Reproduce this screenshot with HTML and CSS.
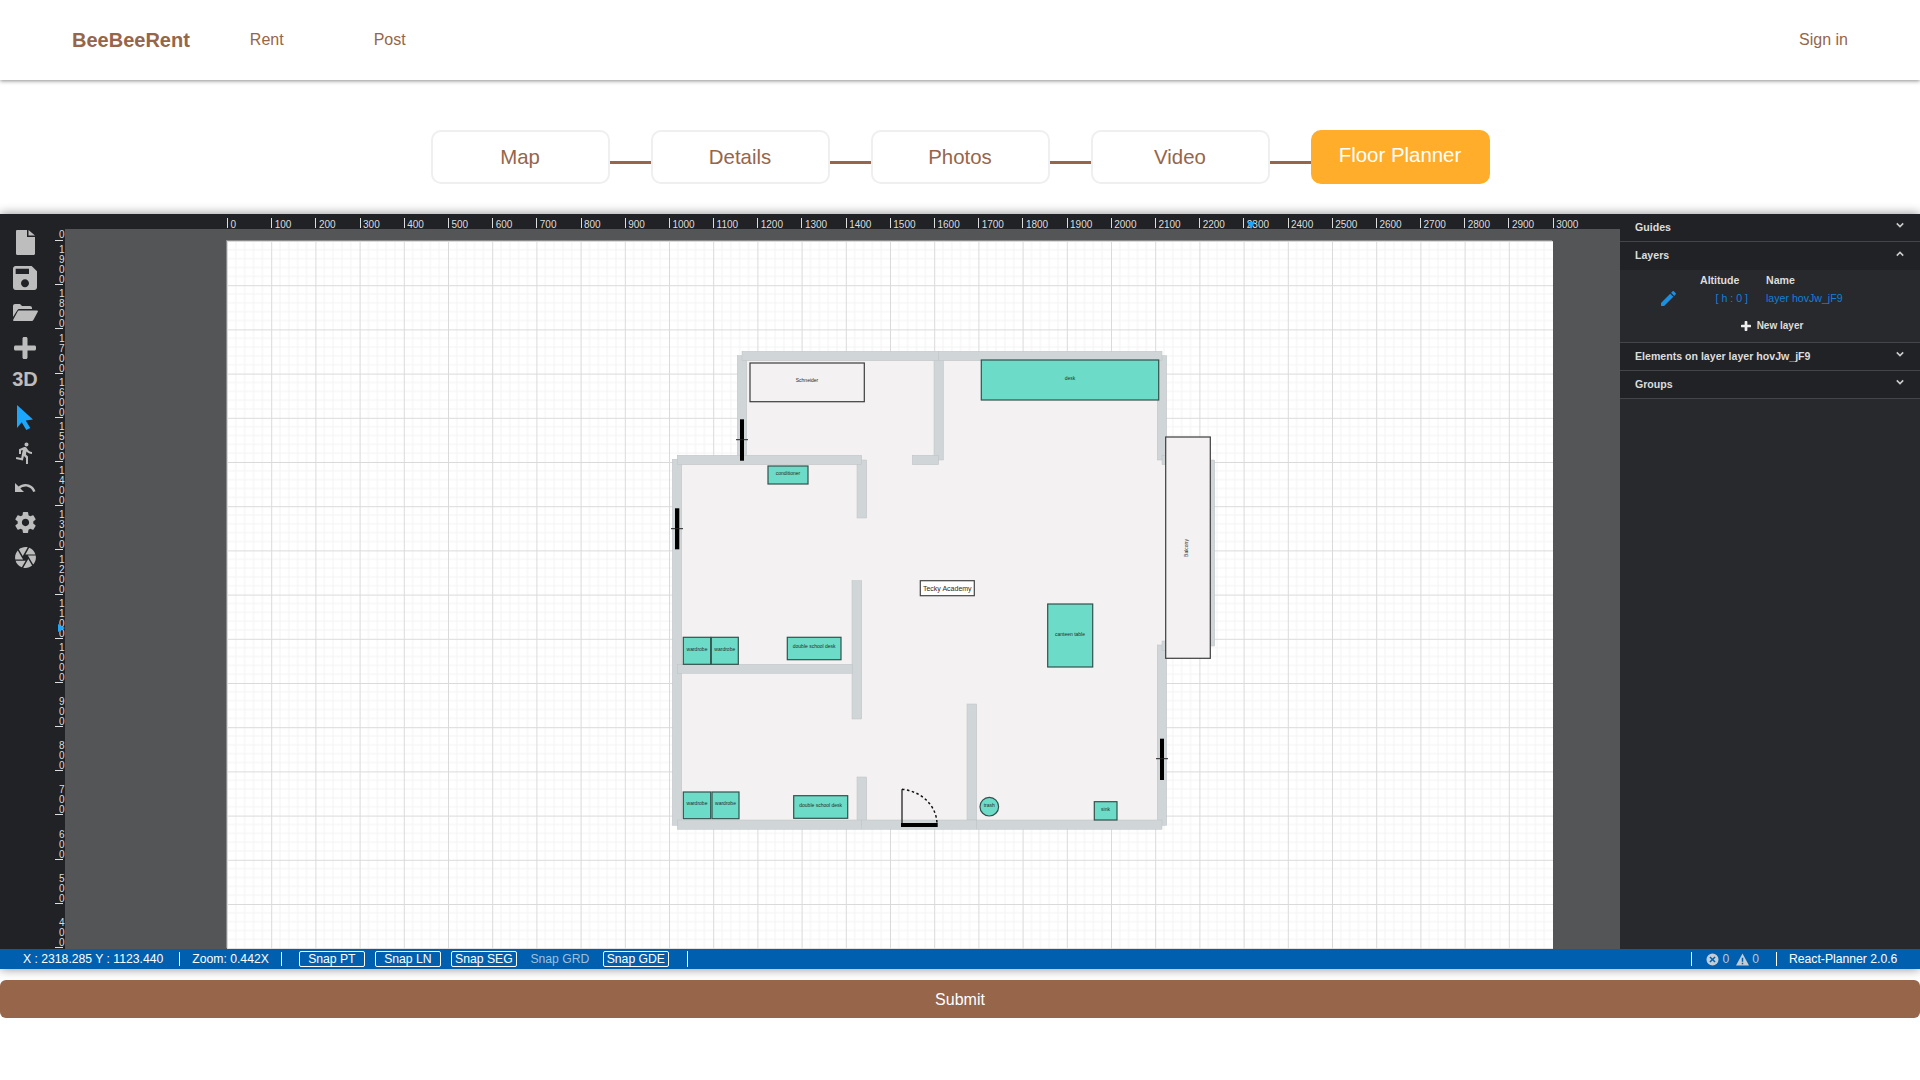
FILE: index.html
```html
<!DOCTYPE html>
<html>

<head>
	<meta charset="utf-8">
	<title>BeeBeeRent</title>
	<link rel="stylesheet" href="styles.css">
</head>

<body>
	<header class="topbar">
		<a class="logo">BeeBeeRent</a>
		<nav class="nav">
			<a>Rent</a>
			<a>Post</a>
		</nav>
		<a class="sign-in">Sign in</a>
	</header>

	<div class="stepper">
		<div class="step">Map</div>
		<span class="link"></span>
		<div class="step">Details</div>
		<span class="link"></span>
		<div class="step">Photos</div>
		<span class="link"></span>
		<div class="step">Video</div>
		<span class="link"></span>
		<div class="step active">Floor Planner</div>
	</div>

	<section class="editor">
		<div class="editor-main">
			<aside class="toolbar">
				<div class="tool"><svg class="i-file" viewBox="0 0 19 25"><path d="M0 1.2C0 .5.5 0 1.2 0H11v7h8v16.8c0 .7-.5 1.2-1.200 1.200H1.200C.5 25 0 24.500 0 23.800zM12.500 0L19 5.500h-6.500z"/></svg></div>
				<div class="tool"><svg class="i-24" viewBox="3 3 18 18"><path d="M17 3H5c-1.110 0-2 .9-2 2v14c0 1.100.89 2 2 2h14c1.100 0 2-.9 2-2V7l-4-4zm-5 16c-1.660 0-3-1.340-3-3s1.340-3 3-3 3 1.340 3 3-1.340 3-3 3zm3-10H5V5h10v4z"/></svg></div>
				<div class="tool"><svg class="i-folder" viewBox="0 0 25 17"><path d="M0 13V2C0 .9.9 0 2 0h5l2 2h8c1.100 0 2 .9 2 2v1H6.500c-1 0-1.700.5-2.200 1.300z"/><path d="M6 6.500h18c.8 0 1.200.6.8 1.300l-4.300 8c-.4.8-1.200 1.200-2 1.200H1c-.8 0-1.200-.6-.8-1.300l4.300-8c.3-.7.800-1.200 1.500-1.200z"/></svg></div>
				<div class="tool"><svg class="i-plus" viewBox="0 0 22 22"><path d="M8.500 1.500C8.500.7 9.200 0 10 0h2c.8 0 1.500.7 1.500 1.500v7h7c.8 0 1.500.7 1.500 1.500v2c0 .8-.7 1.500-1.500 1.500h-7v7c0 .8-.7 1.500-1.500 1.500h-2c-.8 0-1.500-.7-1.500-1.500v-7h-7C.7 13.500 0 12.800 0 12v-2c0-.8.7-1.500 1.500-1.500h7z"/></svg></div>
				<div class="tool tool-3d">3D</div>
				<div class="tool selected"><svg class="i-pointer" viewBox="0 0 16 25"><path d="M0 0l16 14.500-7.300.9 4.600 7.700-4 1.900-4.600-7.800L0 23z"/></svg></div>
				<div class="tool"><svg class="i-24" viewBox="0 0 24 24"><path d="M13.490 5.480c1.100 0 2-.9 2-2s-.9-2-2-2-2 .9-2 2 .9 2 2 2zm-3.600 13.900l1-4.400 2.100 2v6h2v-7.500l-2.100-2 .6-3c1.300 1.500 3.300 2.500 5.500 2.500v-2c-1.900 0-3.500-1-4.300-2.400l-1-1.600c-.4-.6-1-1-1.700-1-.3 0-.5.1-.8.1l-5.200 2.200v4.700h2v-3.400l1.800-.7-1.600 8.100-4.900-1-.4 2 7 1.400z"/></svg></div>
				<div class="tool"><svg class="i-24" viewBox="0 0 24 24"><path d="M12.500 8c-2.650 0-5.050.99-6.900 2.600L2 7v9h9l-3.620-3.620c1.390-1.160 3.160-1.880 5.120-1.880 3.540 0 6.550 2.310 7.600 5.500l2.370-.78C21.080 11.030 17.150 8 12.500 8z"/></svg></div>
				<div class="tool"><svg class="i-25" viewBox="0 0 24 24"><path d="M19.430 12.980c.04-.32.07-.64.07-.98s-.03-.66-.07-.98l2.110-1.650c.19-.15.24-.42.12-.64l-2-3.460c-.12-.22-.39-.3-.61-.22l-2.490 1c-.52-.4-1.080-.73-1.690-.98l-.38-2.650C14.460 2.180 14.250 2 14 2h-4c-.25 0-.46.18-.49.42l-.38 2.650c-.61.25-1.170.59-1.690.98l-2.490-1c-.23-.09-.49 0-.61.22l-2 3.460c-.13.22-.07.49.12.64l2.110 1.650c-.04.32-.07.65-.07.98s.03.66.07.98l-2.110 1.650c-.19.15-.24.42-.12.64l2 3.460c.12.22.39.3.61.22l2.490-1c.52.4 1.080.73 1.690.98l.38 2.650c.03.24.24.42.49.42h4c.25 0 .46-.18.49-.42l.38-2.650c.61-.25 1.170-.59 1.690-.98l2.490 1c.23.09.49 0 .61-.22l2-3.460c.12-.22.07-.49-.12-.64l-2.110-1.650zM12 15.500c-1.930 0-3.500-1.570-3.500-3.500s1.570-3.500 3.500-3.500 3.500 1.570 3.500 3.500-1.570 3.500-3.500 3.500z"/></svg></div>
				<div class="tool"><svg class="i-25" viewBox="0 0 24 24"><path d="M9.400 10.500l4.770-8.260C13.470 2.090 12.750 2 12 2c-2.400 0-4.600.85-6.320 2.250l3.660 6.350.06-.1zM21.540 9c-.92-2.920-3.150-5.260-6-6.340L11.880 9h9.660zm.26 1h-7.490l.29.5 4.760 8.250C21 16.970 22 14.610 22 12c0-.69-.07-1.350-.2-2zM8.540 12l-3.900-6.750C3.010 7.030 2 9.390 2 12c0 .69.07 1.350.2 2h7.490l-1.150-2zm-6.080 3c.92 2.920 3.150 5.260 6 6.340L12.120 15H2.460zm11.270 0l-3.900 6.760c.7.15 1.420.24 2.170.24 2.400 0 4.600-.85 6.320-2.250l-3.660-6.350-.93 1.600z"/></svg></div>
			</aside>

			<div class="workspace">
				<div class="ruler-corner"></div>
				<div class="ruler-x">
					<span>0</span><span>100</span><span>200</span><span>300</span><span>400</span><span>500</span><span>600</span><span>700</span><span>800</span><span>900</span>
					<span>1000</span><span>1100</span><span>1200</span><span>1300</span><span>1400</span><span>1500</span><span>1600</span><span>1700</span><span>1800</span><span>1900</span>
					<span>2000</span><span>2100</span><span>2200</span><span>2300</span><span>2400</span><span>2500</span><span>2600</span><span>2700</span><span>2800</span><span>2900</span>
					<span>3000</span>
					<i class="marker-x"></i>
				</div>
				<div class="ruler-y">
					<span class="first">0</span><span>1900</span><span>1800</span><span>1700</span><span>1600</span><span>1500</span><span>1400</span><span>1300</span>
					<span>1200</span><span>1100</span><span>1000</span><span>900</span><span>800</span><span>700</span><span>600</span><span>500</span><span>400</span>
					<i class="marker-y"></i>
				</div>
				<div class="canvas">
					<div class="sheet">
						<svg class="plan" width="1326" height="708" viewBox="227 241 1326 708">
							<defs>
								<pattern id="grid" x="227" y="241" width="44.2" height="44.2" patternUnits="userSpaceOnUse">
									<path class="grid-minor" d="M8.840 0V44.200M17.680 0V44.200M26.520 0V44.200M35.360 0V44.200M0 8.840H44.200M0 17.680H44.200M0 26.520H44.200M0 35.360H44.200"/>
									<path class="grid-major" d="M.5 0V44.200M0 .5H44.200"/>
								</pattern>
							</defs>
							<rect x="227" y="241" width="1326" height="708" fill="url(#grid)"/>

							<polygon class="floor" points="742,356 1162,356 1162,460 1210,460 1210,645 1162,645 1162,825 677,825 677,460 742,460"/>

							<!-- walls -->
							<rect class="wall" x="1205" y="460" width="9.700" height="186"/>
							<rect class="wall" x="737.300" y="355.700" width="9.400" height="104.300"/>
							<rect class="wall" x="934" y="355.700" width="9.400" height="104.300"/>
							<rect class="wall" x="1157.300" y="355.700" width="9.400" height="104.300"/>
							<rect class="wall" x="1157.300" y="645" width="9.400" height="180.300"/>
							<rect class="wall" x="672.300" y="459.300" width="9.400" height="366"/>
							<rect class="wall" x="857" y="460" width="9.700" height="58"/>
							<rect class="wall" x="852" y="580.700" width="9.700" height="138.300"/>
							<rect class="wall" x="857" y="777" width="9.700" height="48.300"/>
							<rect class="wall" x="967" y="704" width="9.700" height="116"/>
							<rect class="wall" x="742" y="351.300" width="196.300" height="9.400"/>
							<rect class="wall" x="938.300" y="351.300" width="223.700" height="9.400"/>
							<rect class="wall" x="677.300" y="455.300" width="184.400" height="9.400"/>
							<rect class="wall" x="912.300" y="455.300" width="26.400" height="9.400"/>
							<rect class="wall" x="677.300" y="664.300" width="175.400" height="9"/>
							<rect class="wall" x="677.300" y="820" width="184" height="9.300"/>
							<rect class="wall" x="861.300" y="820" width="115.400" height="9.300"/>
							<rect class="wall" x="976.700" y="820" width="185.300" height="9.300"/>
							<rect class="wall" x="1162" y="455.300" width="5" height="9.400"/>
							<rect class="wall" x="1162" y="641" width="5" height="9.400"/>

							<!-- windows -->
							<rect class="opening" x="740" y="419.300" width="4" height="41.400"/>
							<path class="opening-line" d="M736 439.700H748"/>
							<rect class="opening" x="675" y="508.300" width="4.300" height="41"/>
							<path class="opening-line" d="M671 528.700H683"/>
							<rect class="opening" x="1160" y="738.700" width="4" height="41.300"/>
							<path class="opening-line" d="M1156 758.700H1168"/>

							<!-- door -->
							<rect class="opening" x="901" y="823" width="36.700" height="4"/>
							<path class="door-leaf" d="M902 823V789.300"/>
							<path class="door-arc" d="M902 789.300C920 791 936 804 937 823"/>

							<!-- items -->
							<rect class="item plain" x="750" y="363" width="114.300" height="38.700"/>
							<text class="label" x="807" y="380.500">Schneider</text>
							<rect class="item" x="981.300" y="360" width="177.400" height="40"/>
							<text class="label" x="1070" y="378.500">desk</text>
							<rect class="item" x="768" y="466" width="40" height="18"/>
							<text class="label" x="788" y="473.500">conditioner</text>
							<rect class="item note" x="920.300" y="580.700" width="54" height="15"/>
							<text class="label big" x="947.300" y="589">Tecky Academy</text>
							<rect class="item" x="1047.700" y="604" width="45" height="63"/>
							<text class="label" x="1070" y="634.500">canteen table</text>
							<rect class="item plain" x="1165.700" y="437" width="44.600" height="221.300"/>
							<text class="label" transform="translate(1187 548) rotate(-90)">Balcony</text>
							<rect class="item" x="683.300" y="637.300" width="27.400" height="27"/>
							<text class="label" x="697" y="649.800">wardrobe</text>
							<rect class="item" x="711.300" y="637.300" width="27" height="27"/>
							<text class="label" x="724.800" y="649.800">wardrobe</text>
							<rect class="item" x="787.300" y="637.300" width="53.700" height="22.400"/>
							<text class="label" x="814.200" y="646.800">double school desk</text>
							<rect class="item" x="683.300" y="792" width="27.400" height="26.700"/>
							<text class="label" x="697" y="803.800">wardrobe</text>
							<rect class="item" x="712" y="792" width="27" height="26.700"/>
							<text class="label" x="725.500" y="803.800">wardrobe</text>
							<rect class="item" x="793.700" y="795.700" width="54" height="22.600"/>
							<text class="label" x="820.700" y="805.800">double school desk</text>
							<circle class="item" cx="989.300" cy="806.700" r="9.300"/>
							<text class="label" x="989.300" y="805.500">trash</text>
							<rect class="item" x="1094.300" y="801.700" width="22.700" height="18.300"/>
							<text class="label" x="1105.500" y="809.500">sink</text>
						</svg>
					</div>
				</div>
			</div>

			<aside class="panel">
				<div class="panel-head">Guides <svg class="chev" viewBox="0 0 10 6"><path d="M1 1l4 4 4-4"/></svg></div>
				<div class="panel-head open">Layers <svg class="chev" viewBox="0 0 10 6"><path d="M1 5l4-4 4 4"/></svg></div>
				<div class="panel-body">
					<div class="layer-table">
						<span></span>
						<b>Altitude</b>
						<b>Name</b>
						<svg class="pencil" viewBox="3 3 18 18"><path d="M3 17.250V21h3.750L17.810 9.940l-3.750-3.750L3 17.250zM20.710 7.040c.39-.39.39-1.020 0-1.410l-2.340-2.340c-.39-.39-1.020-.39-1.410 0l-1.830 1.830 3.750 3.750 1.830-1.830z"/></svg>
						<span class="altitude">[ h : 0 ]</span>
						<span class="layer-name">layer hovJw_jF9</span>
					</div>
					<div class="new-layer">
						<svg viewBox="0 0 22 22"><path d="M8 1.500C8 .7 8.700 0 9.500 0h3c.8 0 1.500.7 1.500 1.500V8h6.500c.8 0 1.500.7 1.500 1.500v3c0 .8-.7 1.500-1.500 1.500H14v6.500c0 .8-.7 1.500-1.500 1.500h-3C8.700 22 8 21.300 8 20.500V14H1.500C.7 14 0 13.300 0 12.500v-3C0 8.700.7 8 1.500 8H8z"/></svg>
						New layer
					</div>
				</div>
				<div class="panel-head">Elements on layer layer hovJw_jF9 <svg class="chev" viewBox="0 0 10 6"><path d="M1 1l4 4 4-4"/></svg></div>
				<div class="panel-head">Groups <svg class="chev" viewBox="0 0 10 6"><path d="M1 1l4 4 4-4"/></svg></div>
			</aside>
		</div>

		<footer class="statusbar">
			<span class="coords">X : 2318.285 Y : 1123.440</span>
			<span class="zoom">Zoom: 0.442X</span>
			<div class="snaps">
				<span class="snap on">Snap PT</span>
				<span class="snap on">Snap LN</span>
				<span class="snap on">Snap SEG</span>
				<span class="snap">Snap GRD</span>
				<span class="snap on">Snap GDE</span>
			</div>
			<div class="errors">
				<svg viewBox="0 0 14 14"><path fill-rule="evenodd" d="M7 .5a6.500 6.500 0 1 0 0 13 6.500 6.500 0 0 0 0-13zM4.800 3.700L7 5.900l2.200-2.200 1.100 1.100L8.100 7l2.200 2.200-1.100 1.100L7 8.100l-2.200 2.200-1.100-1.100L5.900 7 3.700 4.800z"/></svg>
				<span>0</span>
				<svg viewBox="0 0 14 13"><path fill-rule="evenodd" d="M7 0l7 13H0zM6.200 4.500v4.500h1.600V4.500zM6.200 10v1.500h1.600V10z"/></svg>
				<span>0</span>
			</div>
			<span class="version">React-Planner 2.0.6</span>
		</footer>
	</section>

	<button class="submit">Submit</button>
</body>

</html>
```

FILE: styles.css
```css
* {
	box-sizing: border-box;
}

body {
	margin: 0;
	background: #fff;
	font-family: "Liberation Sans", Arial, sans-serif;
	color: #96654a;
}

/* top navigation */
.topbar {
	display: flex;
	align-items: center;
	height: 80px;
	padding: 0 72px;
	background: #fff;
	box-shadow: 0 1px 4px rgba(0, 0, 0, 0.45);
	font-size: 16px;
}

.logo {
	font-size: 20px;
	font-weight: bold;
}

.nav {
	display: flex;
	gap: 90px;
	margin-left: 60px;
}

.sign-in {
	margin-left: auto;
}

/* steps */
.stepper {
	display: flex;
	justify-content: center;
	align-items: center;
	margin-top: 50px;
}

.step {
	display: flex;
	justify-content: center;
	align-items: center;
	width: 179px;
	height: 54px;
	border: 2px solid #f0efef;
	border-radius: 10px;
	font-size: 20.4px;
}

.step.active {
	padding-bottom: 4px;
	background: #ffad2a;
	border-color: #ffad2a;
	color: #fff;
}

.link {
	width: 41px;
	height: 3px;
	margin-top: 11px;
	background: #96654a;
}

/* planner */
.editor {
	margin-top: 30px;
	box-shadow: 0 0 10px rgba(0, 0, 0, 0.45);
}

.editor-main {
	display: flex;
	height: 735px;
	background: #212226;
}

.toolbar {
	display: flex;
	flex-direction: column;
	flex: none;
	width: 50px;
	padding-top: 11px;
}

.tool {
	display: flex;
	justify-content: center;
	align-items: center;
	height: 35px;
	fill: #bdbdbd;
	color: #bdbdbd;
}

.tool.selected {
	fill: #1ca6fc;
}

.tool-3d {
	padding-bottom: 6px;
	font-size: 20px;
	font-weight: bold;
}

.i-file {
	width: 19px;
	height: 25px;
}

.i-folder {
	width: 25px;
	height: 17px;
}

.i-plus {
	width: 22px;
	height: 22px;
}

.i-pointer {
	width: 16px;
	height: 25px;
}

.i-24 {
	width: 24px;
	height: 24px;
}

.i-25 {
	width: 25px;
	height: 25px;
}

.workspace {
	display: grid;
	flex: 1;
	grid-template-columns: 15px 1fr;
	grid-template-rows: 15px 1fr;
	min-width: 0;
}

.ruler-x {
	position: relative;
	display: flex;
	padding-left: 162px;
	background: #212226;
	color: #ddd;
	font-size: 10px;
	line-height: 11px;
}

.ruler-x span {
	flex: none;
	width: 44.2px;
	padding: 5px 0 0 3.5px;
	background: linear-gradient(#ddd, #ddd) 0 4px / 1px 10px no-repeat;
}

.marker-x {
	position: absolute;
	top: 8px;
	left: 1182px;
	border-top: 7px solid #1ca6fc;
	border-left: 4px solid transparent;
	border-right: 4px solid transparent;
}

.ruler-y {
	position: relative;
	display: flex;
	flex-direction: column;
	overflow: hidden;
	color: #ddd;
	font-size: 10px;
	line-height: 10px;
}

.ruler-y span {
	display: flex;
	flex: none;
	align-items: flex-end;
	height: 44.2px;
	padding-left: 9px;
	word-break: break-all;
	background: linear-gradient(#ddd, #ddd) 5px 100% / 8px 1px no-repeat;
}

.ruler-y span.first {
	height: 12px;
	padding-bottom: 1px;
}

.marker-y {
	position: absolute;
	top: 395px;
	left: 8px;
	border-left: 7px solid #1ca6fc;
	border-top: 4px solid transparent;
	border-bottom: 4px solid transparent;
}

.canvas {
	padding: 12px 67px 0 162px;
	background: #545557;
	overflow: hidden;
}

.sheet {
	width: 1326px;
	height: 708px;
	background: #fff;
	box-shadow: -1px -1px 0 #8b8b8b;
	overflow: hidden;
}

.plan {
	display: block;
}

.grid-minor {
	fill: none;
	stroke: #f3f3f3;
	stroke-width: 1;
}

.grid-major {
	fill: none;
	stroke: #dadada;
	stroke-width: 1;
}

.floor {
	fill: #f3f1f2;
}

.wall {
	fill: #d0d5d7;
	stroke: #bcc1c3;
	stroke-width: 0.5;
}

.opening {
	fill: #000;
}

.opening-line {
	stroke: #222;
	stroke-width: 1;
}

.door-leaf {
	stroke: #333;
	stroke-width: 1.4;
}

.door-arc {
	fill: none;
	stroke: #111;
	stroke-width: 1.5;
	stroke-dasharray: 2.5 2.5;
}

.item {
	fill: #6cdcc8;
	stroke: #33504c;
	stroke-width: 1.2;
}

.item.plain {
	fill: #f3f1f2;
	stroke: #3c3c3c;
}

.item.note {
	fill: #fff;
	stroke: #444;
}

.label {
	fill: #2a2a2a;
	font-size: 5px;
	text-anchor: middle;
	dominant-baseline: middle;
}

.label.big {
	font-size: 7px;
}

/* right panel */
.panel {
	flex: none;
	width: 300px;
	background: #28292d;
	color: #ddd;
	font-size: 10.6px;
}

.panel-head {
	display: flex;
	justify-content: space-between;
	align-items: center;
	height: 28px;
	padding: 0 16px 2px 15px;
	background: #212226;
	border-bottom: 1px solid #44454a;
	font-weight: bold;
}

.panel-head.open {
	border-bottom: 0;
}

.chev {
	width: 8px;
	height: 6px;
	margin-bottom: 3px;
	fill: none;
	stroke: #ccc;
	stroke-width: 2;
}

.panel-body {
	height: 73px;
	padding-top: 1px;
	background: #28292d;
	border-bottom: 1px solid #44454a;
}

.layer-table {
	display: grid;
	grid-template-columns: 80px 66px 1fr;
	grid-auto-rows: 18px;
	align-items: center;
}

.pencil {
	width: 15px;
	height: 15px;
	margin-left: 41px;
	fill: #1c8fe0;
}

.altitude {
	padding-right: 18px;
	text-align: right;
	color: #1080d8;
}

.layer-name {
	color: #1080d8;
}

.new-layer {
	display: flex;
	justify-content: center;
	align-items: center;
	gap: 6px;
	margin: 13px 0 0 4px;
	font-size: 10px;
	font-weight: bold;
}

.new-layer svg {
	width: 10px;
	height: 10px;
	fill: #eee;
}

/* status bar */
.statusbar {
	display: flex;
	align-items: center;
	height: 20px;
	padding-left: 23px;
	background: #005faf;
	color: #fff;
	font-size: 12.2px;
}

.coords {
	padding-right: 16px;
	border-right: 1px solid #fff;
	line-height: 14px;
}

.zoom {
	padding: 0 12px;
	border-right: 1px solid #fff;
	line-height: 14px;
}

.snaps {
	display: flex;
	gap: 10px;
	padding: 0 18px 0 17px;
	border-right: 1px solid #fff;
	line-height: 14px;
}

.snap {
	display: flex;
	justify-content: center;
	align-items: center;
	width: 66px;
	height: 16px;
	border: 1px solid transparent;
	color: #9fc0dc;
}

.snap.on {
	border-color: #fff;
	border-radius: 2px;
	color: #fff;
}

.errors {
	display: flex;
	align-items: center;
	gap: 3px;
	margin-left: auto;
	padding: 0 17px 0 14px;
	border-left: 1px solid #fff;
	border-right: 1px solid #fff;
	color: #b8c8d8;
	line-height: 14px;
}

.errors svg {
	width: 13px;
	height: 13px;
	fill: #c4ccd4;
}

.errors span + svg {
	margin-left: 4px;
}

.version {
	width: 143px;
	padding-left: 12px;
}

.submit {
	display: block;
	width: 100%;
	height: 38px;
	margin-top: 11px;
	padding-top: 2px;
	border: 0;
	border-radius: 6px;
	background: #96654a;
	color: #fff;
	font-family: inherit;
	font-size: 16px;
}
```
